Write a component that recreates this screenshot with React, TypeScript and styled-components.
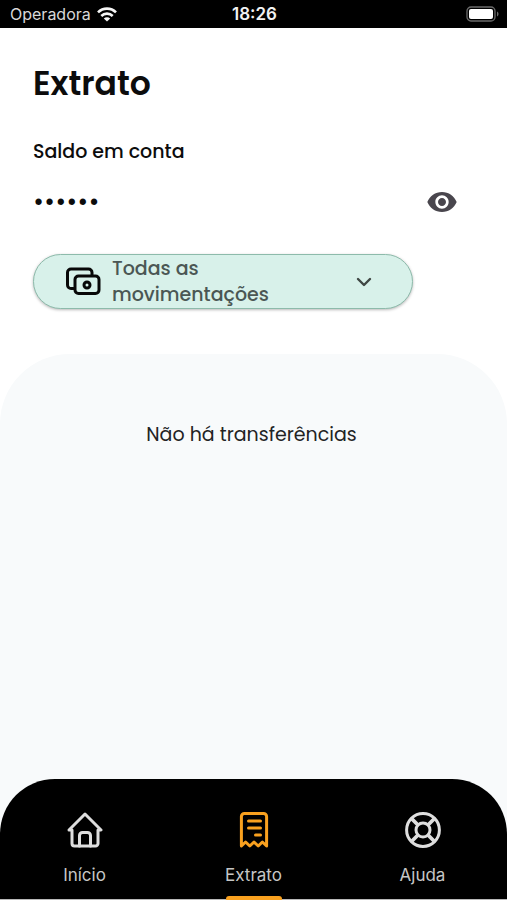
import React, { useState } from "react";
import styled, { createGlobalStyle } from "styled-components";

const GlobalStyle = createGlobalStyle`
  * { box-sizing: border-box; }
  body {
    margin: 0;
    background: #ffffff;
    color: #0c0c0c;
    font-family: Poppins, Inter, "Liberation Sans", sans-serif;
  }
  button { font: inherit; color: inherit; cursor: pointer; }
`;

const Screen = styled.div`
  min-height: 100vh;
  display: flex;
  flex-direction: column;
`;

const StatusBar = styled.div`
  height: 28px;
  padding: 0 8px 0 10px;
  display: grid;
  grid-template-columns: 1fr auto 1fr;
  align-items: center;
  background: #000000;
  color: #d8d8d8;
  font-family: Inter, sans-serif;
  font-size: 16px;
  line-height: 28px;
`;

const Carrier = styled.div`
  display: flex;
  align-items: center;
  gap: 6px;
`;

const Clock = styled.time`
  color: #f2f2f2;
  font-size: 17px;
  font-weight: 600;
`;

const Battery = styled.svg`
  justify-self: end;
`;

const Header = styled.header`
  padding: 32px 33px 45px;
  display: flex;
  flex-direction: column;
`;

const Title = styled.h1`
  margin: 0;
  font-size: 33px;
  line-height: 48px;
  font-weight: 600;
`;

const BalanceLabel = styled.h2`
  margin: 28px 0 0;
  font-size: 19px;
  line-height: 32px;
  font-weight: 500;
`;

const BalanceRow = styled.div`
  margin-top: 14px;
  padding-right: 16px;
  display: flex;
  align-items: center;
  justify-content: space-between;
`;

const Balance = styled.span`
  font-size: 24px;
  line-height: 40px;
  font-weight: 500;
`;

const EyeButton = styled.button`
  display: flex;
  padding: 0;
  border: 0;
  background: none;
  color: #49464d;
`;

const Filter = styled.button`
  width: 100%;
  max-width: 380px;
  min-height: 55px;
  margin-top: 32px;
  padding: 0 40px 0 32px;
  display: flex;
  align-items: center;
  gap: 10px;
  border: 1px solid #8dbbab;
  border-radius: 28px;
  background: #d8f1ea;
  box-shadow: 0 1px 3px rgba(0, 0, 0, 0.28);
  text-align: left;
`;

const FilterText = styled.span`
  max-width: 200px;
  margin-right: auto;
  color: #4b5754;
  font-size: 19px;
  line-height: 26px;
  font-weight: 500;
`;

const Sheet = styled.main`
  flex: 1;
  padding: 65px 24px 24px;
  border-radius: 70px 70px 0 0;
  background: #f8fafb;
`;

const EmptyMessage = styled.p`
  margin: 0;
  padding-right: 4px;
  text-align: center;
  color: #222324;
  font-size: 19px;
  line-height: 32px;
`;

const NavBackdrop = styled.div`
  background: #f8fafb;
`;

const Nav = styled.nav`
  display: flex;
  border-radius: 55px 55px 0 0;
  background: #000000;
  box-shadow: inset 0 -1px 0 #b9b9b9;
`;

const NavItem = styled.a<{ $active?: boolean }>`
  flex: 1;
  padding-top: 33px;
  display: flex;
  flex-direction: column;
  align-items: center;
  color: ${(p) => (p.$active ? "#f9a11f" : "#dedede")};
  text-decoration: none;
`;

const NavLabel = styled.span`
  margin-top: 15px;
  color: #c6c6c6;
  font-family: Inter, sans-serif;
  font-size: 17px;
  line-height: 24px;
`;

const Indicator = styled.span<{ $active?: boolean }>`
  width: 56px;
  height: 4px;
  margin-top: 9px;
  border-radius: 3px 3px 0 0;
  background: ${(p) => (p.$active ? "#f9a11f" : "transparent")};
`;

const stroke = {
  fill: "none",
  stroke: "currentColor",
  strokeWidth: 3,
  strokeLinecap: "round" as const,
  strokeLinejoin: "round" as const,
  "aria-hidden": true,
};

const WifiIcon = () => (
  <svg width="20" height="15" viewBox="0 0 20 15" fill="none" stroke="#f6f6f6" strokeWidth="2.6" aria-hidden>
    <path d="M1 5.4a12.7 12.7 0 0 1 18 0" />
    <path d="M4.3 9a8.1 8.1 0 0 1 11.4 0" />
    <path d="M10 14.6 6.8 11.5a4.6 4.6 0 0 1 6.4 0Z" fill="#f6f6f6" stroke="none" />
  </svg>
);

const BatteryIcon = () => (
  <Battery width="33" height="16" viewBox="0 0 33 16" role="img" aria-label="Bateria">
    <rect x="1" y="1" width="28" height="14" rx="4" fill="none" stroke="#6b6b6b" strokeWidth="1.3" />
    <rect x="3" y="3" width="24" height="10" rx="2" fill="#ffffff" />
    <path d="M31 5.5v5c2-.8 2-4.2 0-5Z" fill="#6b6b6b" />
  </Battery>
);

const EyeIcon = () => (
  <svg width="32" height="32" viewBox="0 0 24 24" fill="currentColor" aria-hidden>
    <path d="M12 4.5C7 4.5 2.73 7.61 1 12c1.73 4.39 6 7.5 11 7.5s9.27-3.11 11-7.5c-1.73-4.39-6-7.5-11-7.5zM12 17c-2.76 0-5-2.24-5-5s2.24-5 5-5 5 2.24 5 5-2.24 5-5 5zm0-8c-1.66 0-3 1.34-3 3s1.34 3 3 3 3-1.34 3-3-1.34-3-3-3z" />
  </svg>
);

const MoneyIcon = () => (
  <svg width="36" height="30" viewBox="0 0 36 30" {...stroke} color="#080808">
    <path d="M7.500 21.500H5A3.500 3.500 0 0 1 1.500 18V5.500A3.500 3.500 0 0 1 5 2h17.500A3.500 3.500 0 0 1 26 5.500V8" />
    <rect x="9" y="9" width="24" height="17.500" rx="3.500" />
    <circle cx="21" cy="18" r="3" />
  </svg>
);

const ChevronIcon = () => (
  <svg width="16" height="10" viewBox="0 0 16 10" {...stroke} strokeWidth={2.4} color="#3f4744">
    <path d="m2 2 6 6 6-6" />
  </svg>
);

const HomeIcon = () => (
  <svg width="36" height="36" viewBox="0 0 36 36" {...stroke}>
    <path d="M2 18 18 2l16 16h-3v13.500a2.500 2.500 0 0 1-2.500 2.500h-21A2.500 2.500 0 0 1 5 31.500V18Z" />
    <path d="M12.500 34V23.500a3 3 0 0 1 3-3h5a3 3 0 0 1 3 3V34" />
  </svg>
);

const ReceiptIcon = () => (
  <svg width="36" height="36" viewBox="0 0 36 36" {...stroke}>
    <path d="M5.400 34V4.500A3 3 0 0 1 8.400 1.500h19.200a3 3 0 0 1 3 3V34l-4.200-4-4.200 4-4.200-4-4.200 4-4.200-4Z" />
    <path d="M12.500 9h12M12.500 16h12M19.500 23h5" />
  </svg>
);

const HelpIcon = () => (
  <svg width="36" height="36" viewBox="0 0 36 36" {...stroke}>
    <circle cx="18" cy="18" r="16.400" />
    <circle cx="18" cy="18" r="7" />
    <path d="m7 7 5.500 5.500M29 7l-5.500 5.500M7 29l5.500-5.500M29 29l-5.500-5.500" strokeWidth={3.8} />
  </svg>
);

const tabs = [
  { label: "Início", href: "#inicio", Icon: HomeIcon, active: false },
  { label: "Extrato", href: "#extrato", Icon: ReceiptIcon, active: true },
  { label: "Ajuda", href: "#ajuda", Icon: HelpIcon, active: false },
];

export default function App() {
  const [hidden, setHidden] = useState(true);

  return (
    <Screen>
      <GlobalStyle />
      <StatusBar>
        <Carrier>
          Operadora
          <WifiIcon />
        </Carrier>
        <Clock>18:26</Clock>
        <BatteryIcon />
      </StatusBar>
      <Header>
        <Title>Extrato</Title>
        <BalanceLabel>Saldo em conta</BalanceLabel>
        <BalanceRow>
          <Balance>{hidden ? "••••••" : "R$ 0,00"}</Balance>
          <EyeButton type="button" aria-label="Mostrar ou ocultar saldo" onClick={() => setHidden(!hidden)}>
            <EyeIcon />
          </EyeButton>
        </BalanceRow>
        <Filter type="button" aria-haspopup="listbox">
          <MoneyIcon />
          <FilterText>Todas as movimentações</FilterText>
          <ChevronIcon />
        </Filter>
      </Header>
      <Sheet>
        <EmptyMessage>Não há transferências</EmptyMessage>
      </Sheet>
      <NavBackdrop>
        <Nav>
          {tabs.map(({ label, href, Icon, active }) => (
            <NavItem key={label} href={href} $active={active} aria-current={active ? "page" : undefined}>
              <Icon />
              <NavLabel>{label}</NavLabel>
              <Indicator $active={active} />
            </NavItem>
          ))}
        </Nav>
      </NavBackdrop>
    </Screen>
  );
}
